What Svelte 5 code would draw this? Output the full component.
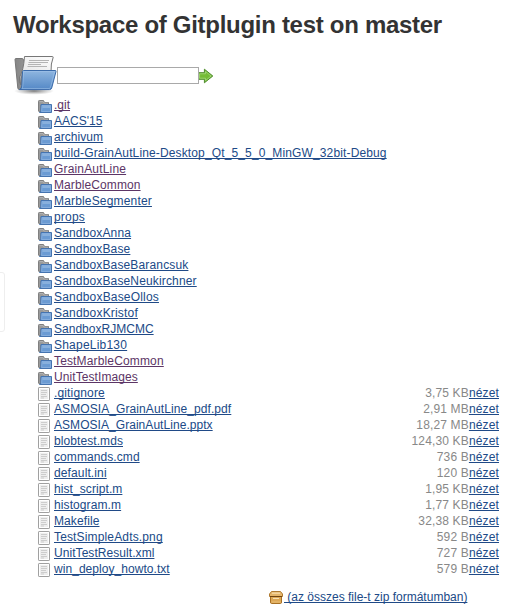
<script>
  // name, visited, tracking in px
  const folders = [
    ['.git', true, 0], ["AACS'15", false, 0], ['archivum', false, 0.06],
    ['build-GrainAutLine-Desktop_Qt_5_5_0_MinGW_32bit-Debug', false, 0.135],
    ['GrainAutLine', true, 0.17], ['MarbleCommon', true, 0.1], ['MarbleSegmenter', false, 0.17], ['props', false, 0.2],
    ['SandboxAnna', false, 0.15], ['SandboxBase', false, 0.15], ['SandboxBaseBarancsuk', false, 0.15], ['SandboxBaseNeukirchner', false, 0.15],
    ['SandboxBaseOllos', false, 0.18], ['SandboxKristof', false, 0.18], ['SandboxRJMCMC', false, 0.02], ['ShapeLib130', false, 0.22],
    ['TestMarbleCommon', true, 0.15], ['UnitTestImages', true, 0.08]
  ];
  const files = [
    ['.gitignore', '3,75 KB', 0.15], ['ASMOSIA_GrainAutLine_pdf.pdf', '2,91 MB', 0.09],
    ['ASMOSIA_GrainAutLine.pptx', '18,27 MB', 0.05], ['blobtest.mds', '124,30 KB', 0.08],
    ['commands.cmd', '736 B', 0.08], ['default.ini', '120 B', 0.12], ['hist_script.m', '1,95 KB', 0.08],
    ['histogram.m', '1,77 KB', 0.1], ['Makefile', '32,38 KB', 0.1], ['TestSimpleAdts.png', '592 B', 0.15],
    ['UnitTestResult.xml', '727 B', 0.06], ['win_deploy_howto.txt', '579 B', 0.05]
  ];
</script>

<main>
  <div class="stub"></div>
  <h1>Workspace of Gitplugin test on master</h1>
  <div class="path">
    <svg class="big" width="44" height="40" viewBox="0 0 44 40">
      <defs>
        <linearGradient id="blue" x1="0" y1="0" x2="0" y2="1"><stop offset="0" stop-color="#8fb6e0" /><stop offset="1" stop-color="#5488c6" /></linearGradient>
        <linearGradient id="grey" x1="0" y1="0" x2="1" y2="0"><stop offset="0" stop-color="#858585" /><stop offset="1" stop-color="#b5b5b5" /></linearGradient>
        <linearGradient id="paper" x1="0.6" y1="0" x2="0.1" y2="1"><stop offset="0" stop-color="#fafafa" /><stop offset=".6" stop-color="#e8e8e8" /><stop offset="1" stop-color="#777" /></linearGradient>
        <radialGradient id="shade"><stop offset="0" stop-color="#444" stop-opacity=".7" /><stop offset="1" stop-color="#777" stop-opacity="0" /></radialGradient>
      </defs>
      <ellipse cx="21" cy="36" rx="20" ry="3.8" fill="url(#shade)" />
      <path d="M2 4.5Q2 3.5 3 3.5H9.5L10.5 5H34V20L9 34.5H6.5Q5 34.5 4.8 33Z" fill="url(#grey)" stroke="#777" />
      <path d="M11.5 1.5H39.5Q40.5 1.5 40 3Q37.8 8 38 17H9.5Q8 23 8 30Q5.5 27 6.5 22Q10.5 16 11.5 1.5Z" fill="url(#paper)" stroke="#777" />
      <path d="M16 5.5H36M15.5 7.5H35M15 9.5H28M14.5 11.5H34" stroke="#b4b4b4" />
      <path d="M10.5 15.5H42.5Q43.2 15.5 43 16.5L38.7 33Q38.2 34.6 36.5 34.6H6.5Q8.6 33.6 8.8 31L9.5 16.5Q9.7 15.5 10.5 15.5Z" fill="url(#blue)" stroke="#3b6baa" />
      <path d="M10.6 16.6H41.6L37.5 32.3Q37.2 33.5 36 33.5H9Q9.7 32.3 9.8 31Z" fill="none" stroke="#a9caed" stroke-width=".7" opacity=".7" />
    </svg>
    <input type="text" aria-label="path" />
    <svg class="go" width="16" height="16" viewBox="0 0 16 16">
      <path d="M-.5 4.7H5.4V1.2L13.8 8L5.4 14.8V11.3H-.5Z" fill="#73b83c" stroke="#4e8c2b" />
      <path d="M.6 5.8H6.5V3.5L12.1 8L6.5 12.5V10.2H.6Z" fill="#74bc35" stroke="#a5d87a" stroke-width=".8" />
    </svg>
  </div>

  <div class="list">
    {#each folders as [name, visited, tracking]}
      <div class="row">
        <svg width="16" height="16" viewBox="0 0 16 16">
          <path d="M1.5 14.2V4.3Q1.5 3.5 2.3 3.5H6.5L7.5 5.5H11.5V8H4V14.5H2Z" fill="#999" stroke="#808080" />
          <path d="M2.5 4.6H6L7 6.1H11" fill="none" stroke="#b8b8b8" stroke-width=".8" />
          <path d="M4 7.5H14.5V15.5H2.5Q3.8 14.8 3.8 13.5Z" fill="#6598d2" stroke="#4574b0" />
          <path d="M5 8.5H13.5V14.5H4.6Z" fill="#6b9bd3" stroke="#8db3df" stroke-width=".8" />
          <path d="M5.4 9H13V11H5.3Z" fill="#88b0dd" />
        </svg><a href="#top" class:visited style:letter-spacing="{tracking}px">{name}</a>
      </div>
    {/each}
    {#each files as [name, size, tracking]}
      <div class="row">
        <svg width="16" height="16" viewBox="0 0 16 16">
          <rect x="1.5" y="2.5" width="11" height="13" rx=".6" fill="#eee" stroke="#a0a0a0" />
          <rect x="2.5" y="3.5" width="9" height="11" fill="none" stroke="#fff" />
          <path d="M4 5.5H10M4 7.5H10M4 9.5H9M4 11.5H10M4 13H7" stroke="#cdcdcd" />
        </svg><a href="#top" style:letter-spacing="{tracking}px">{name}</a><span class="size">{size}</span><a class="view" href="#top">nézet</a>
      </div>
    {/each}
  </div>

  <div class="zip">
    <svg width="16" height="16" viewBox="0 0 16 16">
      <path d="M2.5 2.5H11.5L13.5 5V7.5H.5V5Z" fill="#e5b66b" stroke="#b07a30" />
      <path d="M3 4.2H11" stroke="#f7ddaa" stroke-width="1.2" />
      <path d="M1.5 7.5H12.5V13Q12.5 14.5 11.5 14.5H2.5Q1.5 14.5 1.5 13Z" fill="#dda856" stroke="#a87024" />
      <path d="M1 7.5H13" stroke="#704411" />
      <path d="M4 9.5H10" stroke="#f7e0b4" />
      <path d="M2.5 13H11.5" stroke="#e8bd75" />
    </svg><a href="#top">&nbsp;(az összes file-t zip formátumban)</a>
  </div>
</main>

<style>
  :global(body) { margin: 0; background: #fff; }
  main {
    position: relative; box-sizing: border-box; width: 523px; height: 616px;
    padding: 10px 24px 0 13px; overflow: hidden;
    font: 12px/16px "Liberation Sans", Arial, sans-serif; color: #333;
  }
  .stub {
    position: absolute; left: -6px; top: 272px; width: 9px; height: 58px;
    border: 1px solid #eee; border-radius: 3px;
  }
  h1 { margin: 0; height: 30px; font-size: 24px; line-height: 30px; font-weight: bold; letter-spacing: -.29px; white-space: nowrap; }
  .path { display: flex; height: 40px; margin-top: 14px; }
  .big { margin-top: 1px; }
  input {
    box-sizing: border-box; width: 142px; height: 17px; margin: 13px 0 0; padding: 0 2px;
    border: 1px solid #a9a9a9; border-radius: 0; background: #fff;
  }
  .go { margin-top: 14px; }
  .list { padding-left: 24px; margin-top: 3px; }
  .row { display: flex; height: 16px; white-space: nowrap; }
  .row svg, .zip svg { flex: none; display: block; }
  .row svg { margin-right: 1px; }
  a { color: #204a87; text-decoration: underline; text-underline-offset: 1px; text-decoration-thickness: 1px; text-decoration-skip-ink: none; }
  a.visited { color: #5c3566; }
  .view { letter-spacing: .15px; }
  .size { margin-left: auto; color: #888; letter-spacing: .15px; }
  .zip { display: flex; margin: 12px 0 0 256px; white-space: nowrap; }
  .zip svg { margin-right: -1px; }
</style>
